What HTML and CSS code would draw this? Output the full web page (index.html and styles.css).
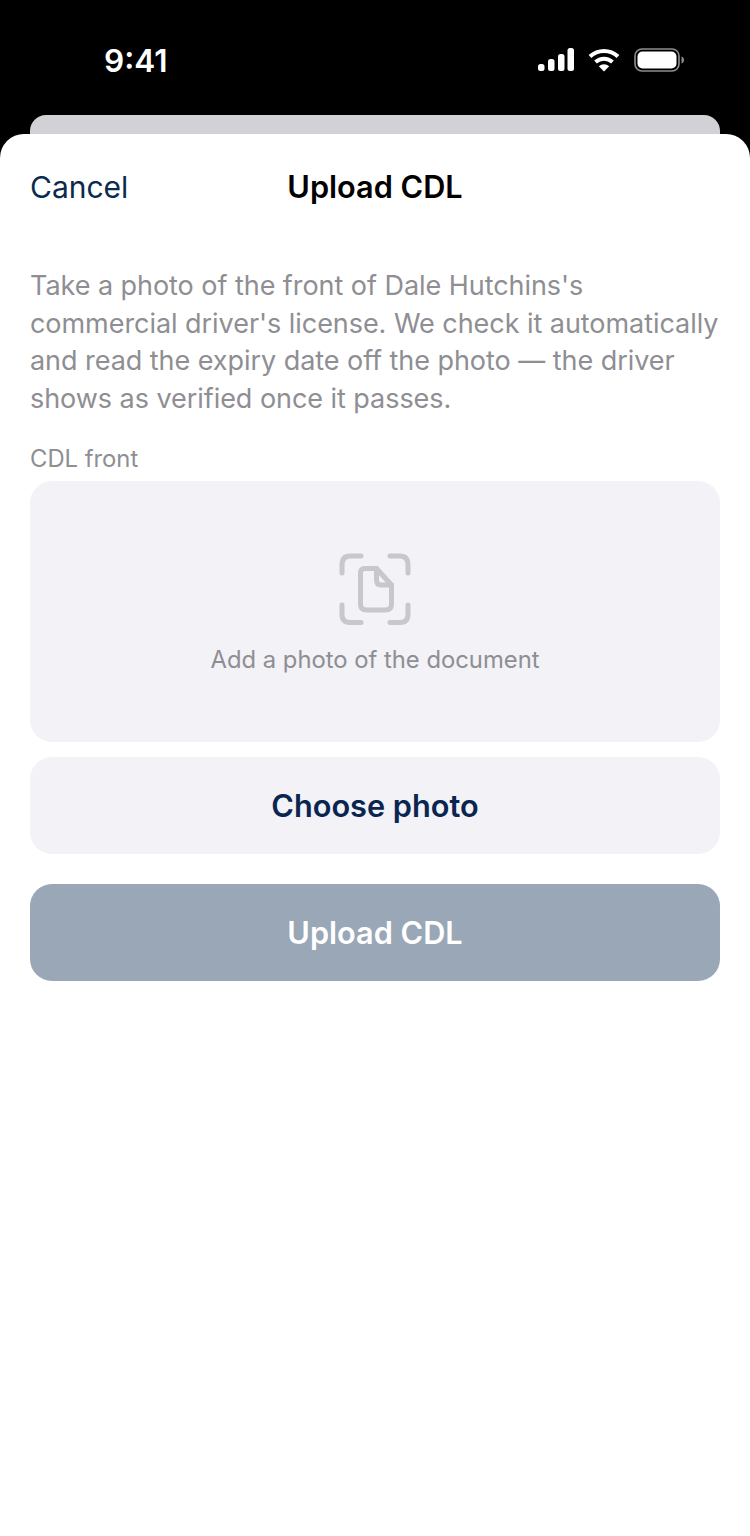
FILE: index.html
```html
<!DOCTYPE html>
<html lang="en">
<head>
  <meta charset="UTF-8" />
  <meta name="viewport" content="width=device-width, initial-scale=1.0"/>
  <title>Upload CDL</title>
  <link rel="stylesheet" href="styles.css">
</head>
<body>
  <div class="status-bar">
    <span class="clock">9:41</span>
    <div class="status-icons">
      <svg width="36" height="24" viewBox="0 0 36 24" fill="#fff">
        <rect x="0" y="16" width="6.500" height="7" rx="2.500"/>
        <rect x="10" y="11" width="6.500" height="12" rx="2.500"/>
        <rect x="20" y="6" width="6.500" height="17" rx="2.500"/>
        <rect x="29.500" y="0" width="6.500" height="23" rx="2.500"/>
      </svg>
      <svg width="32" height="24" viewBox="0 0 32 24" fill="none" stroke="#fff" stroke-width="4">
        <path d="M2 8.500C10 1 22 1 30 8.500"/>
        <path d="M7.500 14C12.500 9.500 19.500 9.500 24.500 14"/>
        <path d="M16 23.500L10.800 18.300C14 15.600 18 15.600 21.200 18.300Z" fill="#fff" stroke="none"/>
      </svg>
      <svg width="50" height="24" viewBox="0 0 50 24" fill="none">
        <rect x="1" y="1" width="44" height="22" rx="7" stroke="#8e8e93" stroke-width="1.600"/>
        <rect x="3.500" y="3.500" width="39" height="17" rx="5" fill="#fff"/>
        <path d="M47.500 8.500C49 9 50 10.400 50 12C50 13.600 49 15 47.500 15.500Z" fill="#8e8e93"/>
      </svg>
    </div>
  </div>
  <div class="peek-card"></div>

  <div class="sheet">
    <div class="sheet-header">
      <span class="cancel">Cancel</span>
      <span class="sheet-title">Upload CDL</span>
    </div>

    <p class="intro">Take a photo of the front of Dale Hutchins's<br>commercial driver's license. We check it automatically<br>and read the expiry date off the photo — the driver<br>shows as verified once it passes.</p>

    <div class="field-label">CDL front</div>
    <div class="photo-box">
      <svg class="doc-icon" width="74" height="74" viewBox="0 0 74 74" fill="none" stroke="#c7c7cc" stroke-width="5" stroke-linecap="round" stroke-linejoin="round">
        <path d="M4 20V12C4 6.500 6.500 3 12 3H23"/>
        <path d="M52 3H62C67.500 3 70 6.500 70 12V20"/>
        <path d="M4 52V61C4 66.500 6.500 69.500 12 69.500H23"/>
        <path d="M52 69.500H62C67.500 69.500 70 66.500 70 61V52"/>
        <path d="M27 15.500H38.500L53.500 32V51C53.500 55 51.500 57 47.500 57H28.500C24.500 57 22.500 55 22.500 51V20C22.500 17 24 15.500 27 15.500Z"/>
        <path d="M38.500 15.500V27C38.500 30.500 40 32 43 32H53.500"/>
      </svg>
      <span class="photo-hint">Add a photo of the document</span>
    </div>

    <button class="btn btn-secondary">Choose photo</button>
    <button class="btn btn-primary">Upload CDL</button>
  </div>
</body>
</html>
```

FILE: styles.css
```css
* {
  box-sizing: border-box;
}

body {
  margin: 0;
  background: #000;
  font-family: Inter, "Liberation Sans", sans-serif;
}

.status-bar {
  height: 115px;
  padding: 42px 66px 0 104px;
  display: flex;
  justify-content: space-between;
  align-items: flex-start;
}

.clock {
  color: #fff;
  font-size: 31.500px;
  font-weight: 600;
  line-height: 38px;
}

.status-icons {
  display: flex;
  gap: 14px;
  align-items: center;
  padding-top: 6px;
}

.peek-card {
  height: 19px;
  margin: 0 30px;
  background: #d1d1d6;
  border-radius: 16px 16px 0 0;
}

.sheet {
  min-height: 1402px;
  padding: 0 30px;
  background: #fff;
  border-radius: 24px 24px 0 0;
}

.sheet-header {
  height: 106px;
  display: flex;
  align-items: center;
  justify-content: center;
  position: relative;
}

.cancel {
  position: absolute;
  left: 0;
  color: #0b2a4f;
  font-size: 30px;
}

.sheet-title {
  margin-top: -2px;
  color: #000;
  font-size: 30.700px;
  font-weight: 600;
}

.intro {
  margin: 27px 0 0;
  color: #8e8e93;
  font-size: 27px;
  line-height: 37.500px;
  letter-spacing: -0.050px;
  white-space: nowrap;
}

.field-label {
  margin-top: 27px;
  color: #8e8e93;
  font-size: 23.800px;
  line-height: 30px;
}

.photo-box {
  height: 261px;
  margin-top: 7px;
  background: #f2f2f7;
  border-radius: 22px;
  display: flex;
  flex-direction: column;
  align-items: center;
  padding-top: 72px;
}

.photo-hint {
  margin-top: 18px;
  color: #8e8e93;
  font-size: 23.800px;
  line-height: 30px;
}

.btn {
  display: block;
  width: 100%;
  height: 97px;
  border: none;
  border-radius: 22px;
  font-family: inherit;
  font-size: 30.700px;
  font-weight: 600;
}

.btn-secondary {
  margin-top: 15px;
  background: #f2f2f7;
  color: #0a2550;
}

.btn-primary {
  margin-top: 30px;
  background: #9aa7b7;
  color: #fff;
}
```
